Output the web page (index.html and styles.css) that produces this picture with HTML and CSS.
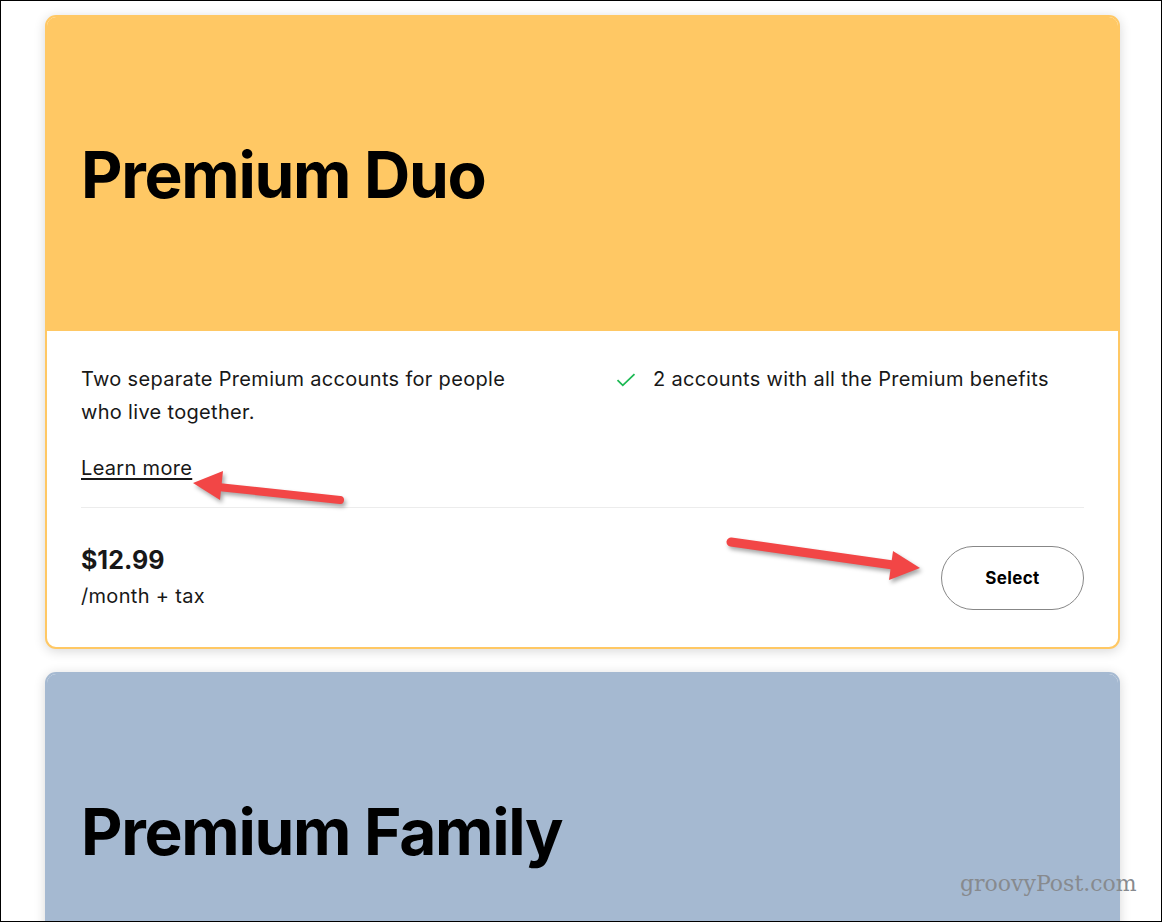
FILE: index.html
```html
<!DOCTYPE html>
<html lang="en">
<head>
    <meta charset="utf-8">
    <title>Premium plans</title>
    <link rel="stylesheet" href="styles.css">
</head>
<body>
    <main class="plans">
        <section class="plan plan-duo">
            <header class="plan-head">
                <h1>Premium Duo</h1>
            </header>
            <div class="plan-body">
                <div class="plan-info">
                    <div class="plan-desc">
                        <p>Two separate Premium accounts for people who live together.</p>
                        <a href="#" class="learn-more">Learn more</a>
                    </div>
                    <ul class="plan-features">
                        <li>
                            <svg class="check" width="20" height="14" viewBox="0 0 20 14"><path d="M1.5 7.2 L6.8 12.3 L18.5 1.2" fill="none" stroke="#1db954" stroke-width="1.8"/></svg>
                            2 accounts with all the Premium benefits
                        </li>
                    </ul>
                </div>
                <div class="plan-foot">
                    <div class="price">
                        <strong>$12.99</strong>
                        <span>/month + tax</span>
                    </div>
                    <button class="select-btn">Select</button>
                </div>
            </div>
        </section>

        <section class="plan plan-family">
            <header class="plan-head">
                <h1>Premium Family</h1>
            </header>
        </section>
    </main>

    <!-- screenshot annotations -->
    <svg class="arrows" width="1163" height="922" viewBox="0 0 1163 922">
        <g class="arrow">
            <line x1="218" y1="487" x2="340" y2="500" stroke="#f24646" stroke-width="8" stroke-linecap="round"/>
            <polygon points="193,483 223,471 220,500" fill="#f24646"/>
        </g>
        <g class="arrow">
            <line x1="731" y1="542" x2="893" y2="565" stroke="#f24646" stroke-width="9" stroke-linecap="round"/>
            <polygon points="920,568 893,551 889,580" fill="#f24646"/>
        </g>
    </svg>
    <div class="watermark">groovyPost.com</div>
</body>
</html>
```

FILE: styles.css
```css
:root {
    --duo-color: #ffc864;
    --family-color: #a5b9d1;
    --text-color: #181818;
    --line-color: #ececec;
}

html, body { margin: 0; }

body {
    box-sizing: border-box;
    width: 1162px;
    height: 922px;
    border: 1px solid #000;
    background: #fff;
    font-family: Inter, "Noto Sans", sans-serif;
    color: var(--text-color);
    overflow: hidden;
    position: relative;
}

.plans { padding: 14px 0 0 44px; display: flex; flex-direction: column; gap: 23px; }

.plan {
    width: 1075px;
    box-sizing: border-box;
    border-radius: 11px;
    border: 2px solid var(--duo-color);
    box-shadow: 0 2px 12px rgba(0, 0, 0, 0.16);
    overflow: hidden;
    background: #fff;
    flex-shrink: 0;
}

.plan-head {
    height: 314px;
    display: flex;
    align-items: center;
    padding-left: 34px;
    background: var(--duo-color);
}

.plan-head h1 { margin: 0; font-size: 64px; font-weight: 700; letter-spacing: -0.02em; color: #000; }

.plan-family { border-color: var(--family-color); }
.plan-family .plan-head { background: var(--family-color); }

.plan-body { padding: 0 34px; letter-spacing: 0.02em; }

.plan-info {
    display: grid;
    grid-template-columns: 467px 1fr;
    column-gap: 68px;
    padding: 32px 0 23px;
    border-bottom: 1px solid var(--line-color);
}

.plan-desc p { margin: 0 0 23px; font-size: 20px; line-height: 33px; }
.learn-more { font-size: 20px; line-height: 32px; color: var(--text-color); text-decoration: underline; text-underline-offset: 3px; }

.plan-features { list-style: none; margin: 0; padding: 0; }
.plan-features li { display: flex; align-items: center; gap: 17px; font-size: 20px; line-height: 33px; }
.check { flex-shrink: 0; }

.plan-foot { display: flex; justify-content: space-between; align-items: center; padding: 34px 0 33px; }
.price { display: flex; flex-direction: column; }
.price strong { font-size: 25px; line-height: 36px; font-weight: 700; letter-spacing: 0; }
.price span { font-size: 20px; line-height: 36px; }

.select-btn {
    width: 143px;
    height: 64px;
    border: 1px solid #878787;
    border-radius: 32px;
    background: #fff;
    font-family: inherit;
    font-size: 17px;
    font-weight: 700;
    letter-spacing: 0.02em;
    color: #000;
    cursor: pointer;
}

.arrows { position: absolute; left: -1px; top: -1px; pointer-events: none; }
.arrow { filter: drop-shadow(2px 3px 2px rgba(0, 0, 0, 0.35)); }

.watermark {
    position: absolute;
    left: 959px;
    top: 870px;
    font-family: "DejaVu Serif", serif;
    font-size: 22px;
    color: #878a8e;
}
```
